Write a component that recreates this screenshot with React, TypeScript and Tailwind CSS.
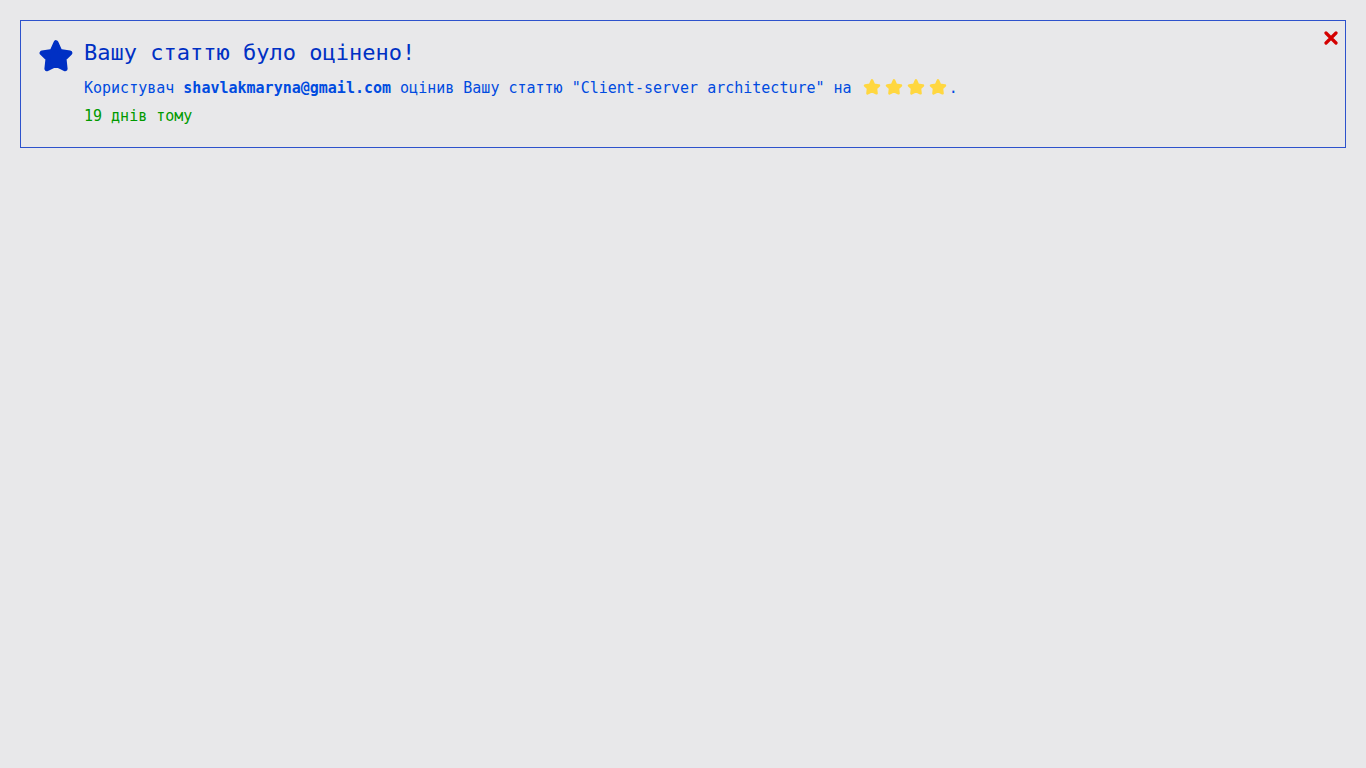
import { useState } from "react";

type Rating = {
  user: string;
  article: string;
  stars: number;
  time: string;
};

const ratings: Rating[] = [
  {
    user: "shavlakmaryna@gmail.com",
    article: "Client-server architecture",
    stars: 4,
    time: "19 днів тому",
  },
];

function StarIcon({ className }: { className: string }) {
  return (
    <svg
      aria-hidden="true"
      viewBox="2 4 36 32"
      className={className}
      fill="currentColor"
      stroke="currentColor"
      strokeWidth="5"
      strokeLinejoin="round"
    >
      <path d="M20 6.7 L23.9 15.6 L33.9 17 L28 22.6 L29.1 32.7 L20 28.2 L10.9 32.7 L12 22.6 L6.1 17 L16.1 15.6 Z" />
    </svg>
  );
}

function CloseIcon({ className }: { className: string }) {
  return (
    <svg
      aria-hidden="true"
      viewBox="0 0 14 14"
      className={className}
      fill="none"
      stroke="currentColor"
      strokeWidth="3.2"
      strokeLinecap="round"
    >
      <path d="M2 2 L12 12 M12 2 L2 12" />
    </svg>
  );
}

function Notification({ rating, onClose }: { rating: Rating; onClose: () => void }) {
  return (
    <article className="flex items-start border border-[#2d52cc] pt-[18px] pr-[7px] pb-[17px] pl-[17px]">
      <StarIcon className="mt-px h-8 w-9 shrink-0 text-[#0030c4]" />
      <div className="ml-[10px] min-w-0 grow">
        <h2 className="text-[22px] leading-[28px] text-[#0030c4]">Вашу статтю було оцінено!</h2>
        <p className="mt-[7px] text-[15px] leading-[28px] text-[#004be0]">
          Користувач <b>{rating.user}</b> оцінив Вашу статтю "{rating.article}" на{" "}
          <span role="img" aria-label={`${rating.stars} з 5`} className="inline-flex gap-1 px-[2px] align-[-2px]">
            {Array.from({ length: rating.stars }, (_, i) => (
              <StarIcon key={i} className="h-4 w-[18px] text-[#ffd740]" />
            ))}
          </span>
          .
        </p>
        <p className="text-[15px] leading-[28px] text-[#009a00]">{rating.time}</p>
      </div>
      <button type="button" aria-label="Закрити" onClick={onClose} className="-mt-2 shrink-0 cursor-pointer text-[#d40000]">
        <CloseIcon className="size-[14px]" />
      </button>
    </article>
  );
}

export default function App() {
  const [items, setItems] = useState(ratings);
  return (
    <main className="min-h-screen bg-[#e8e8ea] p-5 font-['DejaVu_Sans_Mono',monospace]">
      {items.map((item) => (
        <Notification
          key={item.article}
          rating={item}
          onClose={() => setItems(items.filter((other) => other !== item))}
        />
      ))}
    </main>
  );
}
